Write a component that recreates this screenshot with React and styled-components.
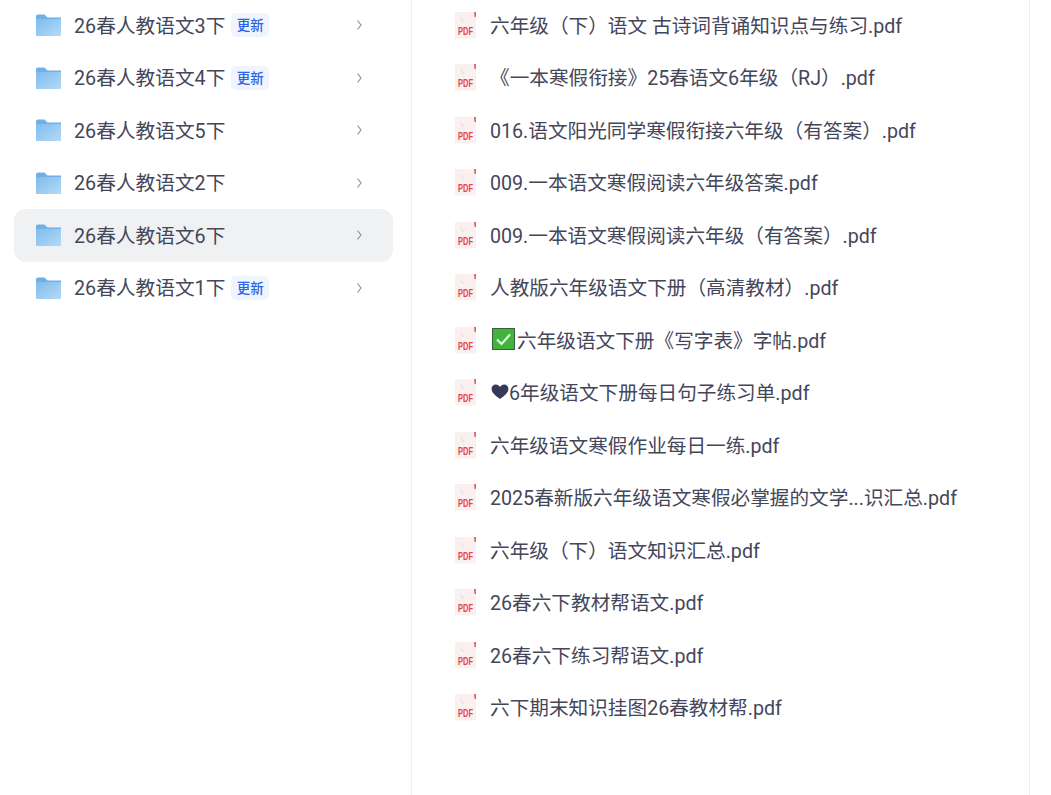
import styled, { createGlobalStyle } from "styled-components";

const GlobalStyle = createGlobalStyle`
  html, body {
    margin: 0;
    padding: 0;
    background: #ffffff;
  }
  body {
    font-family: Roboto, "Noto Sans CJK SC", "Noto Sans", sans-serif;
    color: #44465a;
  }
`;

const Page = styled.div`
  display: flex;
  width: 1051px;
  height: 795px;
  overflow: hidden;
`;

const FolderPane = styled.div`
  width: 412px;
  flex-shrink: 0;
  box-sizing: border-box;
  padding: 0 18px 0 14px;
  border-right: 1px solid #eeeff1;
`;

const FilePane = styled.div`
  width: 618px;
  flex-shrink: 0;
  box-sizing: border-box;
  padding-left: 42px;
  border-right: 1px solid #eeeff1;
`;

const List = styled.div`
  display: flex;
  flex-direction: column;
  margin-top: -1px;
`;

const FolderRow = styled.div`
  display: flex;
  align-items: center;
  height: 52.5px;
  padding: 0 30px 0 22px;
  border-radius: 12px;
  background: ${(p) => (p.$active ? "#f0f1f3" : "transparent")};
`;

const FolderName = styled.span`
  margin-left: 12px;
  padding-bottom: 2px;
  font-size: 19.7px;
  white-space: nowrap;
`;

const Badge = styled.span`
  margin-left: 6px;
  padding: 0 5.5px;
  height: 24px;
  line-height: 24px;
  border-radius: 5px;
  background: #eff4fe;
  color: #2a63e4;
  font-size: 13.5px;
  font-weight: 500;
`;

const Chevron = styled.svg`
  margin-left: auto;
  flex-shrink: 0;
`;

const FileRow = styled.div`
  display: flex;
  align-items: center;
  height: 52.5px;
`;

const FileName = styled.span`
  display: flex;
  align-items: center;
  margin-left: 13px;
  padding-bottom: 2px;
  font-size: 19.65px;
  white-space: nowrap;
`;

const InlineMark = styled.svg`
  flex-shrink: 0;
  margin: 0 ${(p) => p.$after || 0}px 0 ${(p) => p.$before || 0}px;
`;

const FolderIcon = () => (
  <svg width="26" height="24" viewBox="0 0 26 24">
    <defs>
      <linearGradient id="folderBody" x1="0" y1="0" x2="1" y2="1">
        <stop offset="0" stopColor="#7fbcec" />
        <stop offset="1" stopColor="#b4daf8" />
      </linearGradient>
    </defs>
    <path d="M0 3.500C0 2.400.8 1.500 2 1.500h6.500l3 3H25V8H0z" fill="#6fb0e8" />
    <path d="M0 6h25v17H0z" fill="url(#folderBody)" />
  </svg>
);

const PdfIcon = () => (
  <svg width="23" height="27" viewBox="0 0 23 27">
    <path d="M1 0h21v26.500H1z" fill="#f9f0ef" />
    <path d="M20 0H22v5h-1.500z" fill="#e2626a" />
    <path d="M7 5.500l1.500 4 2-1.500" fill="none" stroke="#eddada" strokeWidth="1" />
    <text
      x="11.500"
      y="22.500"
      textAnchor="middle"
      fontFamily="Liberation Sans, sans-serif"
      fontSize="10"
      fontWeight="700"
      fill="#e5444e"
      textLength="15"
      lengthAdjust="spacingAndGlyphs"
    >
      PDF
    </text>
  </svg>
);

const ChevronIcon = () => (
  <Chevron width="7" height="12" viewBox="0 0 7 12">
    <path d="M1.500 1.500L5 6l-3.500 4.500" fill="none" stroke="#8a8d96" strokeWidth="1.100" />
  </Chevron>
);

const CheckMark = () => (
  <InlineMark width="23" height="22" viewBox="0 0 23 22" $before={2} $after={2}>
    <rect x="0.500" y="0.500" width="22" height="21" fill="#41b43a" stroke="#3e5a45" />
    <path d="M5 11.500l4.500 4.500 8.500-9.500" fill="none" stroke="#e8f6e6" strokeWidth="2.200" />
  </InlineMark>
);

const HeartMark = () => (
  <InlineMark width="18" height="15" viewBox="0 0 19 16" $before={1}>
    <path
      d="M9.500 16C5 12.500.5 9.500.5 5 .5 2.200 2.600.5 5 .5c2 0 3.500 1 4.500 2.800C10.500 1.500 12 .5 14 .5c2.400 0 4.500 1.700 4.500 4.500 0 4.500-4.500 7.500-9 11z"
      fill="#363a58"
    />
  </InlineMark>
);

const folders = [
  { name: "26春人教语文3下", fresh: true },
  { name: "26春人教语文4下", fresh: true },
  { name: "26春人教语文5下" },
  { name: "26春人教语文2下" },
  { name: "26春人教语文6下", active: true },
  { name: "26春人教语文1下", fresh: true },
];

const files = [
  { name: "六年级（下）语文 古诗词背诵知识点与练习.pdf" },
  { name: "《一本寒假衔接》25春语文6年级（RJ）.pdf" },
  { name: "016.语文阳光同学寒假衔接六年级（有答案）.pdf" },
  { name: "009.一本语文寒假阅读六年级答案.pdf" },
  { name: "009.一本语文寒假阅读六年级（有答案）.pdf" },
  { name: "人教版六年级语文下册（高清教材）.pdf" },
  { name: "六年级语文下册《写字表》字帖.pdf", mark: "check" },
  { name: "6年级语文下册每日句子练习单.pdf", mark: "heart" },
  { name: "六年级语文寒假作业每日一练.pdf" },
  { name: "2025春新版六年级语文寒假必掌握的文学...识汇总.pdf" },
  { name: "六年级（下）语文知识汇总.pdf" },
  { name: "26春六下教材帮语文.pdf" },
  { name: "26春六下练习帮语文.pdf" },
  { name: "六下期末知识挂图26春教材帮.pdf" },
];

export default function App() {
  return (
    <>
      <GlobalStyle />
      <Page>
        <FolderPane>
          <List>
            {folders.map((folder) => (
              <FolderRow key={folder.name} $active={folder.active}>
                <FolderIcon />
                <FolderName>{folder.name}</FolderName>
                {folder.fresh && <Badge>更新</Badge>}
                <ChevronIcon />
              </FolderRow>
            ))}
          </List>
        </FolderPane>
        <FilePane>
          <List>
            {files.map((file) => (
              <FileRow key={file.name}>
                <PdfIcon />
                <FileName>
                  {file.mark === "check" && <CheckMark />}
                  {file.mark === "heart" && <HeartMark />}
                  {file.name}
                </FileName>
              </FileRow>
            ))}
          </List>
        </FilePane>
      </Page>
    </>
  );
}
